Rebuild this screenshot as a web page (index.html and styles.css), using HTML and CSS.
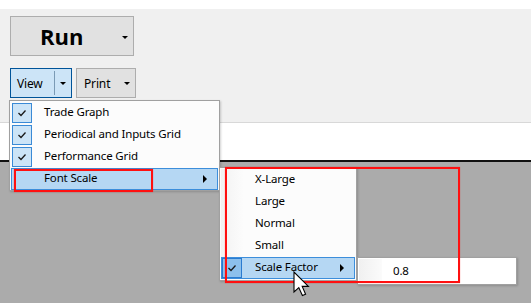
FILE: index.html
```html
<!DOCTYPE html>
<html>
<head>
<meta charset="utf-8">
<link rel="stylesheet" href="styles.css">
</head>
<body>
<div class="page">
  <div class="topband"></div>
  <div class="toolbar">
    <div class="run-btn">
      <span class="run-label">Run</span>
      <span class="arrow-down"></span>
    </div>
    <div class="small-row">
      <div class="split view">
        <span class="split-label">View</span>
        <span class="split-sep"></span>
        <span class="split-drop"><span class="arrow-down"></span></span>
      </div>
      <div class="split print">
        <span class="split-label">Print</span>
        <span class="split-drop"><span class="arrow-down"></span></span>
      </div>
    </div>
  </div>
  <div class="whitearea"></div>
  <div class="darkarea"></div>

  <div class="menu menu-main">
    <div class="item"><span class="check"><svg width="10" height="8" viewBox="0 0 10 8"><polyline points="1.5,4 4,6.5 8.5,1.5" fill="none" stroke="#1a1a1a" stroke-width="1.3"/></svg></span><span class="label">Trade Graph</span></div>
    <div class="item"><span class="check"><svg width="10" height="8" viewBox="0 0 10 8"><polyline points="1.5,4 4,6.5 8.5,1.5" fill="none" stroke="#1a1a1a" stroke-width="1.3"/></svg></span><span class="label">Periodical and Inputs Grid</span></div>
    <div class="item"><span class="check"><svg width="10" height="8" viewBox="0 0 10 8"><polyline points="1.5,4 4,6.5 8.5,1.5" fill="none" stroke="#1a1a1a" stroke-width="1.3"/></svg></span><span class="label">Performance Grid</span></div>
    <div class="item hl"><span class="nocheck"></span><span class="label">Font Scale</span><span class="arrow-right"></span></div>
  </div>

  <div class="menu menu-sub">
    <div class="margin-grad"></div>
    <div class="item"><span class="nocheck"></span><span class="label">X-Large</span></div>
    <div class="item"><span class="nocheck"></span><span class="label">Large</span></div>
    <div class="item"><span class="nocheck"></span><span class="label">Normal</span></div>
    <div class="item"><span class="nocheck"></span><span class="label">Small</span></div>
    <div class="item hl"><span class="check dark"><svg width="10" height="8" viewBox="0 0 10 8"><polyline points="1.5,4 4,6.5 8.5,1.5" fill="none" stroke="#1a1a1a" stroke-width="1.3"/></svg></span><span class="label">Scale Factor</span><span class="arrow-right"></span></div>
  </div>

  <div class="menu menu-value">
    <div class="margin-grad"></div>
    <span class="value">0.8</span>
  </div>

  <div class="redbox box1"></div>
  <div class="redbox box2"></div>

  <svg class="cursor" width="20" height="30" viewBox="0 0 20 30">
    <path d="M1,1 L1,21 L5.8,16.6 L9.4,24.6 L12.6,23.2 L9.2,15.4 L15.4,15.4 Z" fill="#fff" stroke="#000" stroke-width="1.1" stroke-linejoin="miter"/>
  </svg>
</div>
</body>
</html>
```
FILE: styles.css
```css
* { box-sizing: border-box; }
html, body { margin: 0; padding: 0; }
body {
  width: 531px;
  height: 303px;
  overflow: hidden;
  font-family: "Noto Sans", "Open Sans", sans-serif;
  font-size: 11.5px;
  letter-spacing: -0.15px;
  color: #000;
}
.page {
  position: relative;
  width: 531px;
  height: 303px;
  display: flex;
  flex-direction: column;
  background: #ababab;
}
.topband { height: 9px; background: #fff; flex: none; }
.toolbar {
  height: 114px;
  flex: none;
  background: #f0f0f0;
  border-bottom: 1px solid #d8d8d8;
  padding: 7px 0 0 10px;
  display: flex;
  flex-direction: column;
  align-items: flex-start;
}
.run-btn {
  width: 124px;
  height: 40px;
  background: #e1e1e1;
  border: 1px solid #adadad;
  display: flex;
  align-items: center;
  position: relative;
}
.run-label {
  font-family: "Open Sans", "Noto Sans", sans-serif;
  font-weight: 700;
  font-size: 22px;
  letter-spacing: 0;
  margin-left: 29px;
}
.run-btn .arrow-down { position: absolute; right: 5px; top: 19px; }
.arrow-down {
  display: block;
  width: 0; height: 0;
  border-left: 3px solid transparent;
  border-right: 3px solid transparent;
  border-top: 3px solid #000;
}
.small-row {
  margin-top: 12px;
  display: flex;
  gap: 4px;
}
.split {
  height: 30px;
  display: flex;
  align-items: center;
  background: #e1e1e1;
  border: 1px solid #adadad;
  font-size: 12px;
}
.split.view {
  width: 62px;
  background: #cce4f7;
  border-color: #005499;
}
.split.print { width: 60px; }
.split-label { padding-left: 6px; flex: 1; }
.split.print .split-label { padding-left: 7px; }
.split-sep {
  width: 1px;
  height: 24px;
  background: #7a9ab5;
}
.split-drop {
  width: 16px;
  display: flex;
  justify-content: center;
}
.whitearea { height: 37px; background: #fff; flex: none; }
.darkarea { flex: 1; border-top: 2px solid #111; }

.menu {
  position: absolute;
  background: #fcfcfc;
  border: 1px solid #a0a0a0;
  padding: 1px;
  box-shadow: 1px 1px 2px rgba(0,0,0,0.18);
}
.menu-main { left: 9px; top: 100px; width: 211px; height: 91px; }
.menu-sub { left: 219px; top: 167px; width: 138px; height: 114px; }
.menu-value { left: 357px; top: 257px; width: 160px; height: 28px; background: #fff; }

.margin-grad {
  position: absolute;
  left: 1px; top: 1px; bottom: 1px;
  width: 23px;
  background: linear-gradient(to right, #f2f2f2, #fcfcfc);
}
.menu-value .margin-grad { background: linear-gradient(to right, #f0f0f0, #fbfbfb); }

.item {
  position: relative;
  height: 22px;
  display: flex;
  align-items: center;
  border: 1px solid transparent;
}
.item.hl {
  background: #b5d7f3;
  border-color: #3c8edb;
}
.check, .nocheck {
  width: 20px;
  height: 20px;
  flex: none;
  display: flex;
  align-items: center;
  justify-content: center;
}
.check {
  background: #cce4f7;
  border: 1px solid #3a8ad6;
}
.check.dark { background: #8cc0ec; border-color: #2a7bd0; }
.label {
  margin-left: 12px;
  white-space: nowrap;
  flex: 1;
  line-height: 16px;
  margin-bottom: 2px;
}
.menu-sub .label { margin-left: 13px; }
.arrow-right {
  width: 0; height: 0;
  border-top: 4px solid transparent;
  border-bottom: 4px solid transparent;
  border-left: 4px solid #000;
  margin-right: 10px;
}
.value { position: absolute; left: 35px; top: 5px; }

.redbox {
  position: absolute;
  border: 2px solid #ff1010;
  box-shadow: 0 0 1px rgba(255,0,0,0.5);
}
.box1 { left: 14px; top: 169px; width: 139px; height: 23px; }
.box2 { left: 225px; top: 167px; width: 235px; height: 116px; }

.cursor { position: absolute; left: 293px; top: 271px; }
```
